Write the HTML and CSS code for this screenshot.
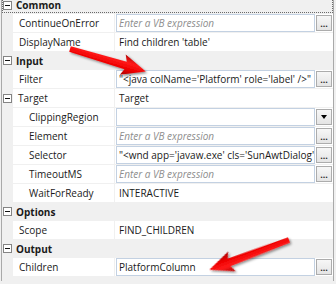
FILE: index.html
```html
<!DOCTYPE html>
<html>
<head>
<meta charset="utf-8">
<link rel="stylesheet" href="styles.css">
</head>
<body>
<div class="grid">
  <div class="cat first focus"><span class="tog"></span><span class="cat-name">Common</span></div>
  <div class="row"><div class="name">ContinueOnError</div><div class="val"><div class="box ph">Enter a VB expression</div><div class="btn">...</div></div></div>
  <div class="row"><div class="name">DisplayName</div><div class="val"><span class="txt">Find children 'table'</span></div></div>
  <div class="cat"><span class="tog"></span><span class="cat-name">Input</span></div>
  <div class="row"><div class="name">Filter</div><div class="val"><div class="box">"&lt;java colName='Platform' role='label' /&gt;"</div><div class="btn">...</div></div></div>
  <div class="row parent"><span class="tog"></span><div class="name">Target</div><div class="val"><span class="txt">Target</span></div></div>
  <div class="row"><div class="name sub">ClippingRegion</div><div class="val"><div class="box"></div><div class="btn drop"><span class="tri"></span></div></div></div>
  <div class="row"><div class="name sub">Element</div><div class="val"><div class="box ph">Enter a VB expression</div><div class="btn">...</div></div></div>
  <div class="row"><div class="name sub">Selector</div><div class="val"><div class="box"><span class="clip">"&lt;wnd app='javaw.exe' cls='SunAwtDialog' title='Select Platform' /&gt;"</span></div><div class="btn">...</div></div></div>
  <div class="row"><div class="name sub">TimeoutMS</div><div class="val"><div class="box ph">Enter a VB expression</div><div class="btn">...</div></div></div>
  <div class="row"><div class="name sub">WaitForReady</div><div class="val"><span class="txt">INTERACTIVE</span></div></div>
  <div class="cat"><span class="tog"></span><span class="cat-name">Options</span></div>
  <div class="row"><div class="name">Scope</div><div class="val"><span class="txt">FIND_CHILDREN</span></div></div>
  <div class="cat"><span class="tog"></span><span class="cat-name">Output</span></div>
  <div class="row"><div class="name">Children</div><div class="val"><div class="box">PlatformColumn</div><div class="btn">...</div></div></div>
</div>
<svg class="arrows" width="336" height="284" viewBox="0 0 336 284">
  <defs>
    <filter id="sh" x="-20%" y="-40%" width="140%" height="180%">
      <feDropShadow dx="1.5" dy="1.5" stdDeviation="1" flood-color="#000" flood-opacity="0.45"/>
    </filter>
    <linearGradient id="rg" x1="0" y1="-11" x2="0" y2="11" gradientUnits="userSpaceOnUse">
      <stop offset="0" stop-color="#b00000"/>
      <stop offset="0.35" stop-color="#ff1a1a"/>
      <stop offset="0.65" stop-color="#ee0000"/>
      <stop offset="1" stop-color="#a00000"/>
    </linearGradient>
  </defs>
  <g filter="url(#sh)">
    <g transform="translate(70 49) rotate(16.5)">
      <polygon fill="url(#rg)" points="0,-2.8 58,-4 55,-10.5 79,0 55,10.5 58,4 0,2.8"/>
    </g>
    <g transform="translate(289 240) rotate(159.5)">
      <polygon fill="url(#rg)" points="0,-2.8 64,-4 61,-10.5 85,0 61,10.5 64,4 0,2.8"/>
    </g>
  </g>
</svg>
</body>
</html>
```
FILE: styles.css
```css
html, body {
  margin: 0;
  padding: 0;
}
body {
  width: 336px;
  height: 284px;
  overflow: hidden;
  position: relative;
  background: #f0f0f0;
  font-family: "Open Sans", "Noto Sans", sans-serif;
  font-size: 10px;
  color: #1a1a1a;
}
.grid {
  margin-left: 1px;
  width: 333px;
  height: 284px;
  box-sizing: border-box;
  border-left: 1px solid #a9a9a9;
  border-right: 1px solid #a9a9a9;
  background: #f0f0f0;
}
.cat {
  height: 17px;
  margin-bottom: 1px;
  display: flex;
  align-items: center;
  font-weight: bold;
  background: #f0f0f0;
}
.cat.first {
  margin-top: -3px;
  height: 16px;
}
.cat.focus {
  outline: 1px dotted #6a6a6a;
  outline-offset: -1px;
}
.tog {
  width: 9px;
  height: 9px;
  box-sizing: border-box;
  border: 1px solid #848484;
  background: #fff;
  margin-left: 1px;
  display: flex;
  align-items: center;
  justify-content: center;
  flex: none;
}
.tog::after {
  content: "";
  width: 5px;
  height: 1px;
  background: #111;
}
.cat-name {
  margin-left: 4px;
}
.row {
  height: 18px;
  margin-bottom: 1px;
  display: flex;
  padding-left: 11px;
}
.row.parent {
  padding-left: 0;
  align-items: center;
}
.row.parent .tog {
  margin-right: 1px;
}
.name {
  width: 101px;
  flex: none;
  box-sizing: border-box;
  background: #fff;
  padding-left: 6px;
  display: flex;
  align-items: center;
  white-space: nowrap;
  overflow: hidden;
  height: 18px;
}
.row.parent .name {
  padding-left: 5px;
}
.name.sub {
  padding-left: 16px;
}
.val {
  flex: 1;
  margin-left: 1px;
  background: #fff;
  display: flex;
  align-items: center;
  min-width: 0;
  height: 18px;
}
.txt {
  padding-left: 4px;
  white-space: nowrap;
}
.box {
  flex: 1;
  min-width: 0;
  height: 18px;
  margin-left: 1px;
  box-sizing: border-box;
  border: 1px solid #c3d1e2;
  background: #fff;
  padding-left: 2px;
  display: flex;
  align-items: center;
  white-space: nowrap;
  overflow: hidden;
}
.clip {
  overflow: hidden;
  white-space: nowrap;
}
.box.ph {
  color: #8d8d8d;
  font-style: italic;
}
.btn {
  width: 16px;
  height: 16px;
  margin: 0 1px 0 1px;
  flex: none;
  box-sizing: border-box;
  border: 1px solid #acacac;
  background: linear-gradient(#f7f7f7, #e4e4e4);
  display: flex;
  justify-content: center;
  align-items: flex-end;
  font-size: 9px;
  line-height: 9px;
  color: #2a2a2a;
  font-weight: bold;
  padding-bottom: 2px;
}
.btn.drop {
  align-items: center;
  padding-bottom: 0;
}
.tri {
  width: 0;
  height: 0;
  border-left: 3.5px solid transparent;
  border-right: 3.5px solid transparent;
  border-top: 4px solid #000;
}
.arrows {
  position: absolute;
  left: 0;
  top: 0;
  pointer-events: none;
}
```
